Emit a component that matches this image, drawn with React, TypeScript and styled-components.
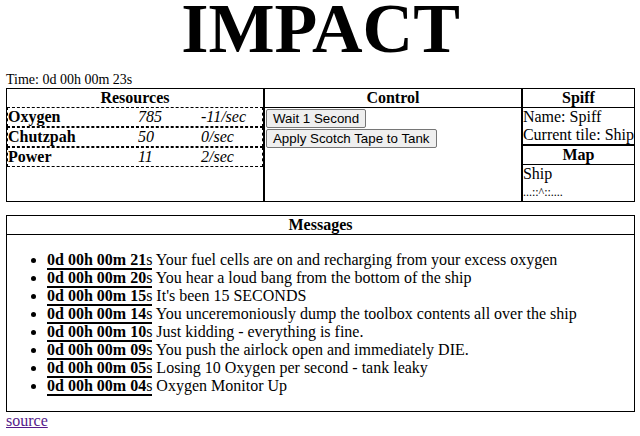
import React from "react";
import styled, { createGlobalStyle } from "styled-components";

const GlobalStyle = createGlobalStyle`
  html, body {
    margin: 0;
    background: #ffffff;
  }
  body {
    padding: 0 5px 0 6px;
    font-family: "Liberation Serif", "Times New Roman", serif;
    font-size: 16px;
    color: #000000;
  }
`;

const Title = styled.h1`
  margin: 0 0 14px;
  font-size: 70px;
  line-height: 58px;
  font-weight: bold;
  text-align: center;
`;

const Clock = styled.div`
  font-size: 14px;
  line-height: 16px;
`;

const Panel = styled.div`
  display: flex;
  border: 1px solid #000;
  line-height: 18px;
`;

const Column = styled.section<{ $fit?: boolean; $divider?: boolean }>`
  flex: ${(p) => (p.$fit ? "none" : "1 1 0")};
  min-width: 0;
  border-right: ${(p) => (p.$divider ? "2px solid #000" : "none")};
`;

const Heading = styled.div<{ $rule?: boolean }>`
  font-weight: bold;
  text-align: center;
  line-height: 18px;
  border-bottom: ${(p) => (p.$rule ? "1px solid #000" : "none")};
`;

const ResourceRow = styled.div`
  display: grid;
  grid-template-columns: 130px 63px 1fr;
  border: 1px dashed #000;
  line-height: 18px;
`;

const ResName = styled.span`
  font-weight: bold;
`;

const ResValue = styled.span`
  font-style: italic;
`;

const ButtonStack = styled.div`
  display: flex;
  flex-direction: column;
  align-items: flex-start;
  gap: 1px;
  padding: 1px 0 0 1px;
`;

const ControlButton = styled.button`
  font-family: "Liberation Sans", Arial, sans-serif;
  font-size: 13.333px;
  line-height: normal;
  padding: 1px 6px;
  color: #000;
  background: #efefef;
  border: 1px solid #767676;
  border-radius: 2px;
`;

const InfoBox = styled.div`
  border-bottom: 1px solid #000;
`;

const MapBox = styled.div`
  border-top: 1px solid #000;
`;

const Line = styled.div`
  line-height: 18px;
  white-space: nowrap;
`;

const MiniMap = styled.div`
  font-size: 12px;
  line-height: 18px;
  white-space: pre;
`;

const MessagesBox = styled.section`
  margin-top: 13px;
  border: 1px solid #000;
`;

const MessageList = styled.ul`
  margin: 16px 0;
  padding-left: 40px;
  line-height: 18px;
`;

const Stamp = styled.span`
  border-bottom: 2px solid #000;
`;

const SourceLink = styled.a`
  color: #551a8b;
  line-height: 18px;
`;

const resources = [
  { name: "Oxygen", value: "785", rate: "-11/sec" },
  { name: "Chutzpah", value: "50", rate: "0/sec" },
  { name: "Power", value: "11", rate: "2/sec" },
];

const messages = [
  { t: "0d 00h 00m 21", text: "Your fuel cells are on and recharging from your excess oxygen" },
  { t: "0d 00h 00m 20", text: "You hear a loud bang from the bottom of the ship" },
  { t: "0d 00h 00m 15", text: "It's been 15 SECONDS" },
  { t: "0d 00h 00m 14", text: "You unceremoniously dump the toolbox contents all over the ship" },
  { t: "0d 00h 00m 10", text: "Just kidding - everything is fine." },
  { t: "0d 00h 00m 09", text: "You push the airlock open and immediately DIE." },
  { t: "0d 00h 00m 05", text: "Losing 10 Oxygen per second - tank leaky" },
  { t: "0d 00h 00m 04", text: "Oxygen Monitor Up" },
];

export default function App() {
  return (
    <>
      <GlobalStyle />
      <Title>IMPACT</Title>
      <Clock>Time: 0d 00h 00m 23s</Clock>
      <Panel>
        <Column $divider>
          <Heading>Resources</Heading>
          {resources.map((r) => (
            <ResourceRow key={r.name}>
              <ResName>{r.name}</ResName>
              <ResValue>{r.value}</ResValue>
              <ResValue>{r.rate}</ResValue>
            </ResourceRow>
          ))}
        </Column>
        <Column $divider>
          <Heading $rule>Control</Heading>
          <ButtonStack>
            <ControlButton>Wait 1 Second</ControlButton>
            <ControlButton>Apply Scotch Tape to Tank</ControlButton>
          </ButtonStack>
        </Column>
        <Column $fit>
          <InfoBox>
            <Heading $rule>Spiff</Heading>
            <Line>Name: Spiff</Line>
            <Line>Current tile: Ship</Line>
          </InfoBox>
          <MapBox>
            <Heading $rule>Map</Heading>
            <Line>Ship</Line>
            <MiniMap>{"...::^::...."}</MiniMap>
          </MapBox>
        </Column>
      </Panel>
      <MessagesBox>
        <Heading $rule>Messages</Heading>
        <MessageList>
          {messages.map((m) => (
            <li key={m.t}>
              <Stamp>
                <b>{m.t}</b>s
              </Stamp>{" "}
              {m.text}
            </li>
          ))}
        </MessageList>
      </MessagesBox>
      <SourceLink href="#">source</SourceLink>
    </>
  );
}
